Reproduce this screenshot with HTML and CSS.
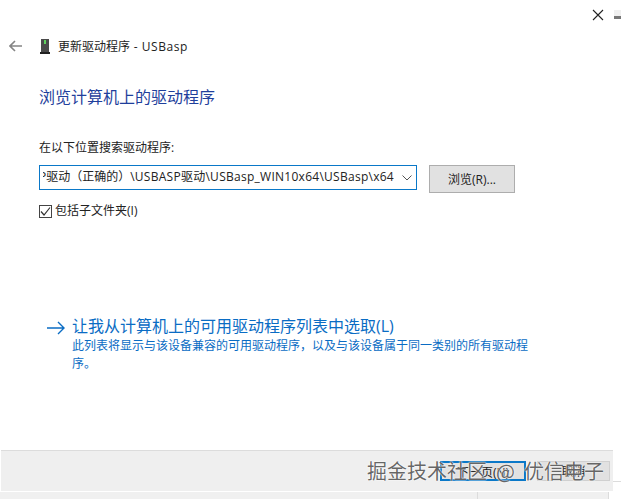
FILE: index.html
```html
<!DOCTYPE html>
<html lang="zh-CN">
<head>
<meta charset="utf-8">
<title>更新驱动程序 - USBasp</title>
<link rel="stylesheet" href="styles.css">
</head>
<body>
<div class="window">
  <div class="topbar">
    <svg class="close" width="12" height="12" viewBox="0 0 12 12"><path d="M1 1L11 11M11 1L1 11" stroke="#222" stroke-width="1.1" fill="none"/></svg>
  </div>
  <div class="edge-block"></div>
  <header class="nav">
    <svg class="back" width="13" height="12" viewBox="0 0 13 12"><path d="M6 1L1 6L6 11M1 6H13" stroke="#858585" stroke-width="1.6" fill="none"/></svg>
    <svg class="device" width="10" height="15" viewBox="0 0 10 15"><rect x="1" y="0" width="8" height="13" fill="#4a4a4a"/><rect x="4" y="1" width="2" height="4" fill="#5fd35f"/><rect x="0" y="13" width="10" height="2" fill="#222"/></svg>
    <span class="nav-title">更新驱动程序<span class="nav-latin"> - USBasp</span></span>
  </header>
  <main class="content">
    <h1 class="heading">浏览计算机上的驱动程序</h1>
    <label class="path-label">在以下位置搜索驱动程序:</label>
    <div class="path-row">
      <div class="combo">
        <div class="combo-clip"><span class="combo-text">USBASP驱动（正确的）<span class="combo-latin">\USBASP驱动\USBasp_WIN10x64\USBasp\x64</span></span></div>
        <svg class="chev" width="10" height="6" viewBox="0 0 10 6"><path d="M0.5 0.5L5 5L9.5 0.5" stroke="#555" stroke-width="1" fill="none"/></svg>
      </div>
      <button class="btn browse" type="button">浏览(R)...</button>
    </div>
    <div class="check-row">
      <span class="check"><svg width="11" height="11" viewBox="0 0 11 11"><path d="M1 5.5L4 9L10 1.5" stroke="#333" stroke-width="1.2" fill="none"/></svg></span>
      <span class="check-text">包括子文件夹(I)</span>
    </div>
    <section class="pick">
      <svg class="pick-arrow" width="18" height="14" viewBox="0 0 18 14"><path d="M11 1L17 7L11 13M0 7H17" stroke="#0a6cc4" stroke-width="1.4" fill="none"/></svg>
      <div class="pick-body">
        <div class="pick-title">让我从计算机上的可用驱动程序列表中选取(L)</div>
        <p class="pick-desc">此列表将显示与该设备兼容的可用驱动程序，以及与该设备属于同一类别的所有驱动程序。</p>
      </div>
    </section>
  </main>
  <footer class="footer">
    <button class="btn next" type="button">下一页(N)</button>
    <button class="btn cancel" type="button">取消</button>
  </footer>
  <div class="side-line"></div>
  <div class="underlay"><span class="divider first"></span><span class="divider second"></span></div>
  <div class="watermark">掘金技术社区 @ 优信电子</div>
</div>
</body>
</html>
```
FILE: styles.css
```css
* { box-sizing: border-box; }
html, body { margin: 0; padding: 0; background: #fff; }
body { font-family: "Open Sans", "Noto Sans CJK SC", sans-serif; font-size: 12px; color: #222; }
.window { position: relative; width: 621px; height: 499px; overflow: hidden; display: flex; flex-direction: column; }
.topbar { height: 37px; display: flex; justify-content: flex-end; padding: 9px 17px 0 0; flex: none; }
.edge-block { position: absolute; left: 614px; top: 10px; width: 7px; height: 9px; background: linear-gradient(#f0f0f0 70%, #777 70%); }
.nav { height: 18px; display: flex; align-items: center; padding-left: 9px; flex: none; }
.device { margin-left: 18px; }
.nav-title { margin-left: 8px; padding-top: 2px; font-size: 12px; line-height: 18px; color: #222; }
.nav-latin { letter-spacing: .55px; }
.content { flex: 1; padding: 0 0 0 39px; display: flex; flex-direction: column; min-height: 0; }
.heading { margin: 31px 0 0; font-size: 16px; line-height: 22px; font-weight: 400; color: #1f3f9c; }
.path-label { margin-top: 31px; line-height: 18px; }
.path-row { margin-top: 8px; display: flex; gap: 12px; align-items: flex-start; }
.combo { width: 378px; height: 25px; border: 1px solid #0a78c8; display: flex; align-items: center; padding: 0 4px 0 3px; }
.combo-clip { width: 352px; overflow: hidden; display: flex; justify-content: flex-end; white-space: nowrap; line-height: 20px; padding-bottom: 2px; }
.combo-text { flex: none; }
.combo-latin { letter-spacing: .27px; }
.chev { margin-left: 8px; flex: none; }
.btn { font: inherit; font-size: 12px; color: #222; background: #e1e1e1; border: 1px solid #adadad; padding: 0; }
.browse { width: 86px; height: 28px; }
.check-row { margin-top: 11px; display: flex; align-items: center; height: 14px; }
.check { width: 13px; height: 13px; border: 1px solid #444; display: flex; align-items: center; justify-content: center; background: #fff; }
.check-text { margin-left: 3px; line-height: 16px; }
.pick { margin-top: 96px; margin-left: 8px; display: flex; align-items: flex-start; }
.pick-arrow { margin-top: 7px; flex: none; }
.pick-body { margin-left: 7px; width: 457px; }
.pick-title { font-size: 16px; line-height: 24px; color: #0a6cc4; }
.pick-desc { margin: -1px 0 0; line-height: 18px; color: #0a6cc4; }
.footer { height: 41px; margin-left: 1px; width: 612px; background: #efefef; border-top: 1px solid #dcdcdc; display: flex; justify-content: flex-end; align-items: flex-start; padding: 10px 3px 0 0; gap: 11px; flex: none; }
.next { width: 86px; height: 20px; border: 2px solid #0a78c8; }
.cancel { width: 73px; height: 20px; border-color: #d0d0d0; }
.side-line { position: absolute; left: 613px; top: 481px; width: 8px; height: 1px; background: #dcdcdc; }
.underlay { position: relative; margin-top: 1px; margin-right: 12px; height: 7px; background: #f0f0f0; flex: none; }
.divider { position: absolute; top: 0; width: 1px; height: 7px; background: #dcdcdc; }
.divider.first { left: 477px; }
.divider.second { left: 608px; }
.watermark { position: absolute; left: 367px; top: 458px; font-size: 20px; line-height: 26px; word-spacing: 4.5px; color: rgba(60,60,60,.78); white-space: nowrap; text-shadow: 0 0 2px #fff, 0 0 1px #fff; font-family: "Noto Sans CJK SC", sans-serif; }
```
